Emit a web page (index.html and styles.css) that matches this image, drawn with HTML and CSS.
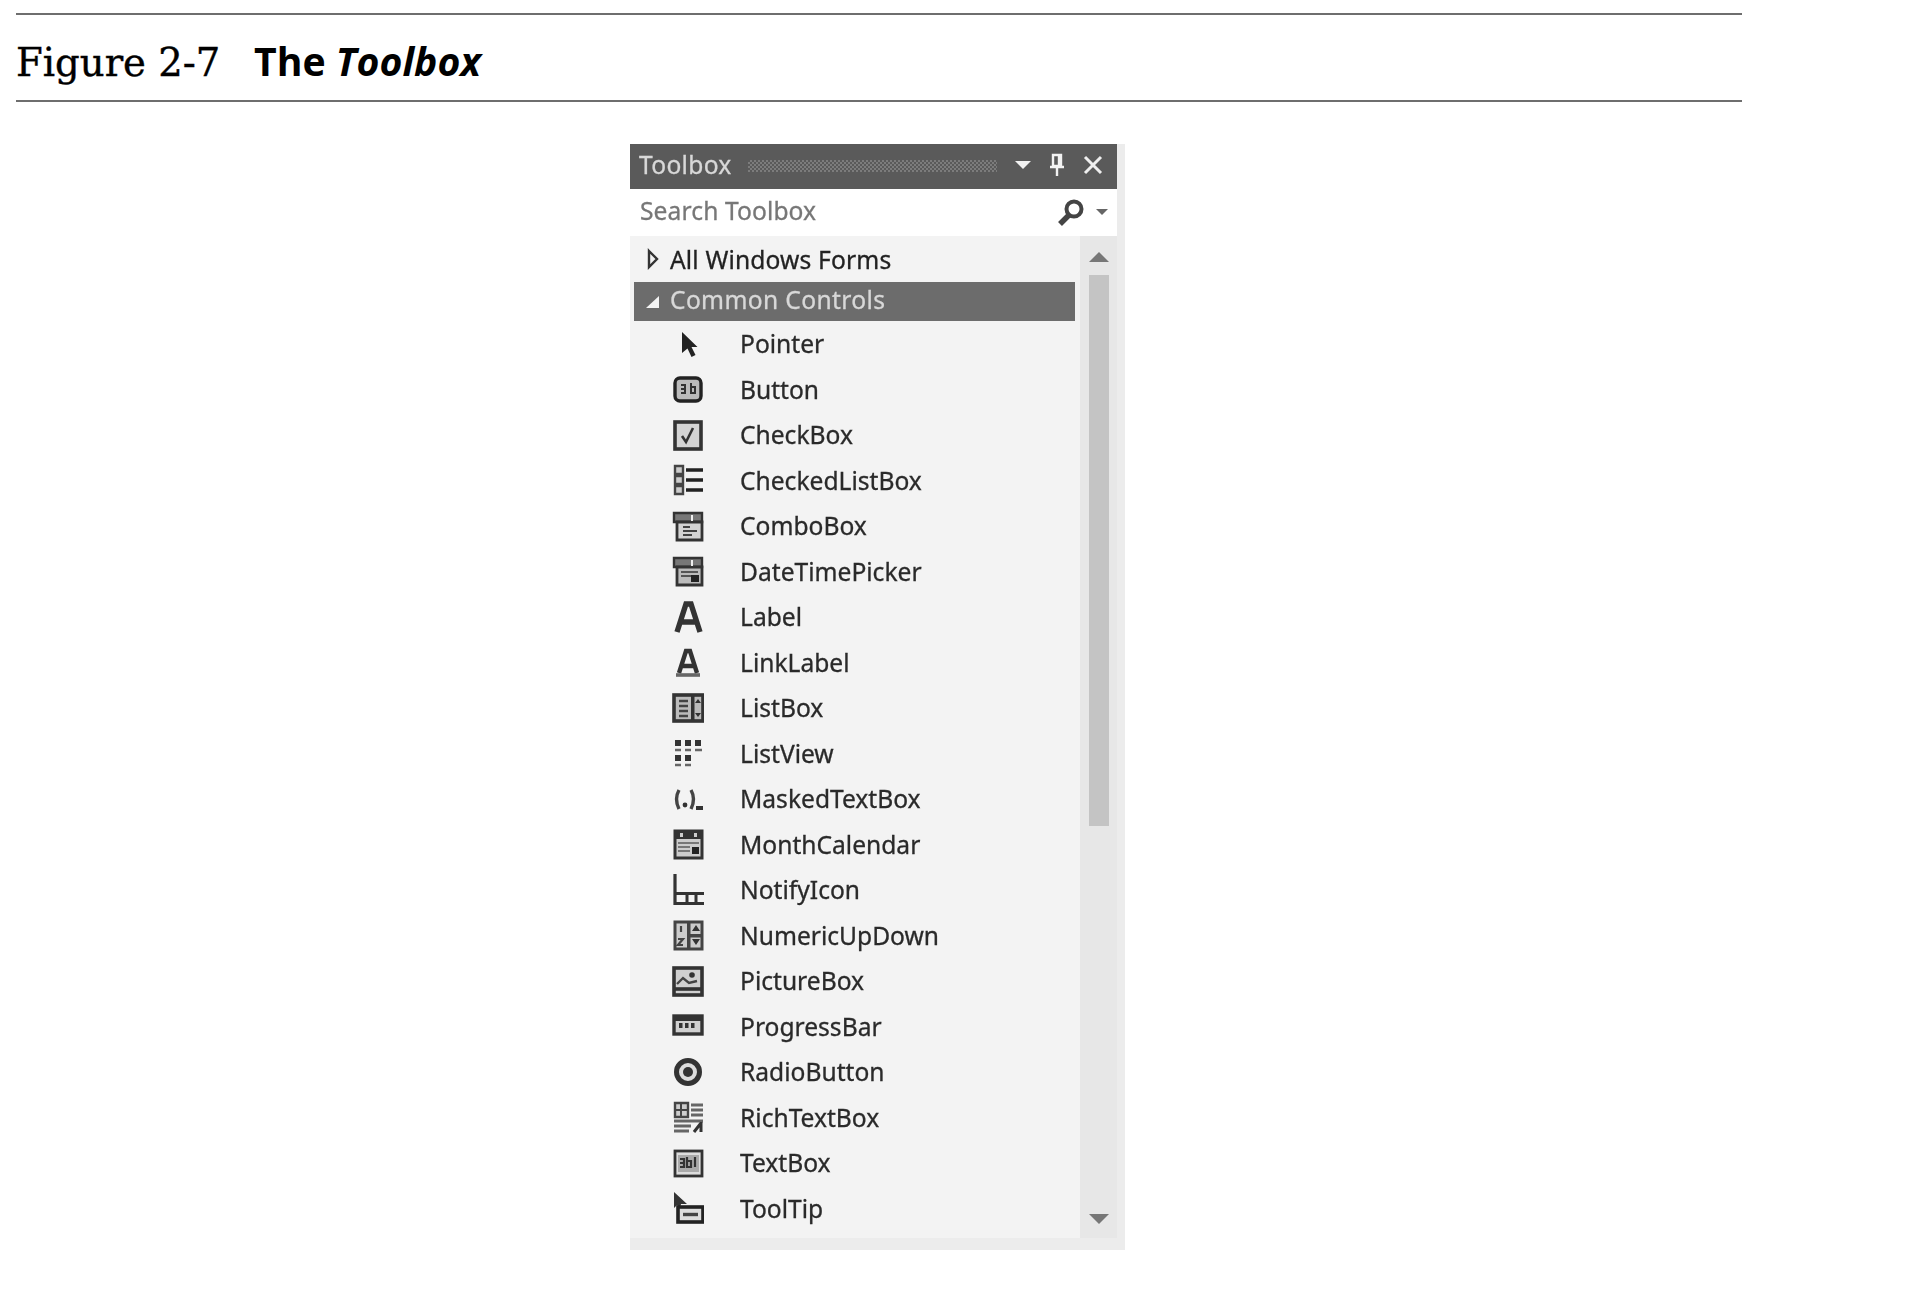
FILE: index.html
```html
<!DOCTYPE html>
<html lang="en">
<head>
    <meta charset="UTF-8">
    <meta name="viewport" content="width=device-width, initial-scale=1.0">
    <title>Figure 2-7 The Toolbox</title>
    <link rel="stylesheet" href="styles.css">
</head>
<body>
<header class="figure-head">
    <h1><span class="figure-num">Figure 2-7</span><span class="figure-name">The <em>Toolbox</em></span></h1>
</header>

<section class="panel">
    <div class="title-bar">
        <span class="title-text">Toolbox</span>
        <span class="grip"></span>
        <svg class="title-icon" width="20" height="30" viewBox="0 0 20 30"><path d="M2 11h16l-8 8z" fill="#f2f2f2"/></svg>
        <svg class="title-icon" width="20" height="30" viewBox="0 0 20 30"><path d="M6 5h8v11H6zM3 17h14M10 17v9M12 6v10" fill="none" stroke="#f2f2f2" stroke-width="2.4"/></svg>
        <svg class="title-icon" width="24" height="30" viewBox="0 0 24 30"><path d="M4 7l16 16M20 7L4 23" fill="none" stroke="#efefef" stroke-width="3"/></svg>
    </div>
    <div class="search-bar">
        <span class="search-text">Search Toolbox</span>
        <svg class="search-icon" width="30" height="32" viewBox="0 0 30 32"><circle cx="18" cy="12" r="7.5" fill="none" stroke="#444" stroke-width="4"/><path d="M13 18L4 27" stroke="#444" stroke-width="5.5"/></svg>
        <svg class="search-drop" width="14" height="10" viewBox="0 0 14 10"><path d="M1 2h12l-6 6z" fill="#666"/></svg>
    </div>
    <div class="list-wrap">
        <div class="tool-list">
            <div class="group-row">
                <svg width="16" height="24" viewBox="0 0 16 24"><path d="M4 4l8 8-8 8z" fill="none" stroke="#333" stroke-width="2.4"/></svg>
                <span>All Windows Forms</span>
            </div>
            <div class="group-row group-open">
                <svg width="16" height="24" viewBox="0 0 16 24"><path d="M14 6v12H1z" fill="#f4f4f4"/></svg>
                <span>Common Controls</span>
            </div>

            <div class="tool-row">
                <svg class="tool-icon" viewBox="0 0 32 32"><path d="M10 4v21l5.5-4.5 4 8.5 4-2-4-8h6z" fill="#222"/></svg>
                <span>Pointer</span>
            </div>
            <div class="tool-row">
                <svg class="tool-icon" viewBox="0 0 32 32"><rect x="3" y="5" width="26" height="23" rx="5" fill="#bbb" stroke="#222" stroke-width="3.4"/><path d="M9 12h4v8H9M13 16H9M19 10v10h4v-6h-4" fill="none" stroke="#333" stroke-width="2"/></svg>
                <span>Button</span>
            </div>
            <div class="tool-row">
                <svg class="tool-icon" viewBox="0 0 32 32"><rect x="3" y="3" width="26" height="27" fill="#d4d4d4" stroke="#333" stroke-width="3.6"/><path d="M10 17l4 6 7-14" fill="none" stroke="#333" stroke-width="2.6"/></svg>
                <span>CheckBox</span>
            </div>
            <div class="tool-row">
                <svg class="tool-icon" viewBox="0 0 32 32"><path d="M3 2h8v8H3zM3 12h8v8H3zM3 22h8v8H3z" fill="#ccc" stroke="#444" stroke-width="2.4"/><path d="M14 6h17M14 16h17M14 26h17" stroke="#222" stroke-width="3.4"/></svg>
                <span>CheckedListBox</span>
            </div>
            <div class="tool-row">
                <svg class="tool-icon" viewBox="0 0 32 32"><path d="M2 3h28v9H2z" fill="#777" stroke="#333" stroke-width="2.4"/><path d="M5 12h25v18H5z" fill="#d4d4d4" stroke="#333" stroke-width="2.8"/><path d="M20 5v6" stroke="#eee" stroke-width="2"/><path d="M11 17h7M11 21h14M11 25h9" stroke="#444" stroke-width="2"/></svg>
                <span>ComboBox</span>
            </div>
            <div class="tool-row">
                <svg class="tool-icon" viewBox="0 0 32 32"><path d="M2 3h28v9H2z" fill="#777" stroke="#333" stroke-width="2.4"/><path d="M5 12h25v18H5z" fill="#bbb" stroke="#333" stroke-width="2.8"/><path d="M20 5v6" stroke="#eee" stroke-width="2"/><path d="M9 17h17M9 21h10" stroke="#555" stroke-width="2"/><rect x="19" y="20" width="8" height="7" fill="#222"/></svg>
                <span>DateTimePicker</span>
            </div>
            <div class="tool-row">
                <svg class="tool-icon" viewBox="0 0 32 32"><path d="M5 31L14 3h5l9 28M9 21h15" fill="none" stroke="#333" stroke-width="5.4"/></svg>
                <span>Label</span>
            </div>
            <div class="tool-row">
                <svg class="tool-icon" viewBox="0 0 32 32"><path d="M7 27L14 5h4l7 22M10 20h12" fill="none" stroke="#333" stroke-width="4.4"/><path d="M4 29h24" stroke="#666" stroke-width="3.6"/></svg>
                <span>LinkLabel</span>
            </div>
            <div class="tool-row">
                <svg class="tool-icon" viewBox="0 0 32 32"><rect x="2" y="3" width="29" height="26" fill="#bbb" stroke="#333" stroke-width="3.6"/><path d="M7 9h9M7 14h9M7 19h9M7 24h9" stroke="#444" stroke-width="2.4"/><path d="M19 4h3.5v24H19z" fill="#333"/><path d="M23 11l3-4 3 4zM23 21h6l-3 4z" fill="#333"/></svg>
                <span>ListBox</span>
            </div>
            <div class="tool-row">
                <svg class="tool-icon" viewBox="0 0 32 32"><path d="M3 3h6v6H3zM13 3h6v6h-6zM23 3h6v6h-6zM3 18h6v6H3zM13 18h6v6h-6z" fill="#333"/><path d="M3 13h6M13 13h6M23 13h7M3 28h6M13 28h6" stroke="#666" stroke-width="2.4"/></svg>
                <span>ListView</span>
            </div>
            <div class="tool-row">
                <svg class="tool-icon" viewBox="0 0 32 32"><path d="M7 7q-5 9 0 19M19 7q5 9 0 19" fill="none" stroke="#444" stroke-width="3.4"/><circle cx="13" cy="22" r="2.4" fill="#333"/><path d="M24 23h7v4h-7z" fill="#333"/></svg>
                <span>MaskedTextBox</span>
            </div>
            <div class="tool-row">
                <svg class="tool-icon" viewBox="0 0 32 32"><rect x="3" y="3" width="27" height="27" fill="#ccc" stroke="#333" stroke-width="3"/><path d="M3 4h27v7H3z" fill="#333"/><path d="M8 5h3v4H8zM22 5h3v4h-3z" fill="#ccc"/><path d="M6 15h21M6 19h12M6 23h12" stroke="#777" stroke-width="2.2"/><rect x="20" y="19" width="7" height="7" fill="#222"/></svg>
                <span>MonthCalendar</span>
            </div>
            <div class="tool-row">
                <svg class="tool-icon" viewBox="0 0 32 32"><path d="M3 0v29.5h29M3 19.5h29" fill="none" stroke="#333" stroke-width="3.2"/><path d="M15 20v9M24 20v9" stroke="#333" stroke-width="3"/></svg>
                <span>NotifyIcon</span>
            </div>
            <div class="tool-row">
                <svg class="tool-icon" viewBox="0 0 32 32"><rect x="3" y="3" width="27" height="27" fill="#ccc" stroke="#444" stroke-width="3"/><path d="M15 3h3.5v27H15zM18 15h12v3.500H18z" fill="#444"/><path d="M20 12l4-6 4 6zM20 20h8l-4 6z" fill="#333"/><path d="M9 7v6M6 20h5l-5 6h5" fill="none" stroke="#444" stroke-width="2.200"/></svg>
                <span>NumericUpDown</span>
            </div>
            <div class="tool-row">
                <svg class="tool-icon" viewBox="0 0 32 32"><rect x="2" y="3" width="28" height="27" fill="#d0d0d0" stroke="#333" stroke-width="3.600"/><path d="M5 19l6-6 6 5 8-2" fill="none" stroke="#444" stroke-width="2.400"/><circle cx="20" cy="10" r="2.800" fill="#333"/><path d="M3 24h26" stroke="#333" stroke-width="3.600"/></svg>
                <span>PictureBox</span>
            </div>
            <div class="tool-row">
                <svg class="tool-icon" viewBox="0 0 32 32"><rect x="2" y="6" width="28" height="18" fill="#d0d0d0" stroke="#333" stroke-width="3.400"/><path d="M3 7h26v4H3z" fill="#333"/><path d="M7 13h3.500v5H7zM13 13h3.500v5H13zM19 13h3.500v5H19z" fill="#333"/></svg>
                <span>ProgressBar</span>
            </div>
            <div class="tool-row">
                <svg class="tool-icon" viewBox="0 0 32 32"><circle cx="16" cy="16" r="11.500" fill="#ddd" stroke="#333" stroke-width="5"/><circle cx="16" cy="16" r="5" fill="#333"/></svg>
                <span>RadioButton</span>
            </div>
            <div class="tool-row">
                <svg class="tool-icon" viewBox="0 0 32 32"><path d="M3 2h13v14H3z" fill="#ccc" stroke="#444" stroke-width="2.400"/><path d="M9 3v13M3 9h13" stroke="#444" stroke-width="2"/><path d="M19 4h12M19 9h12M19 14h12M2 20h29M2 25h17M2 30h15" stroke="#666" stroke-width="2.800"/><path d="M29 21v10M29 22l-7 9" fill="none" stroke="#333" stroke-width="3"/></svg>
                <span>RichTextBox</span>
            </div>
            <div class="tool-row">
                <svg class="tool-icon" viewBox="0 0 32 32"><rect x="3" y="4" width="27" height="25" fill="#ddd" stroke="#333" stroke-width="2.800"/><rect x="6" y="8" width="21" height="17" fill="#aaa"/><path d="M8 12h4v8H8M8 16h4M15 10v10h4v-6h-4M23 10v10" fill="none" stroke="#333" stroke-width="2.200"/></svg>
                <span>TextBox</span>
            </div>
            <div class="tool-row">
                <svg class="tool-icon" viewBox="0 0 32 32"><path d="M2 0v16l3-3 3 3 1-4h6z" fill="#333"/><rect x="6" y="15" width="25" height="15" fill="#ddd" stroke="#222" stroke-width="3.600"/><path d="M11 22.500h15" stroke="#444" stroke-width="3.400"/></svg>
                <span>ToolTip</span>
            </div>
        </div>
        <div class="scroll-bar">
            <svg width="20" height="12" viewBox="0 0 20 12"><path d="M0 11L10 1l10 10z" fill="#777"/></svg>
            <div class="scroll-track"><div class="scroll-thumb"></div></div>
            <svg width="20" height="12" viewBox="0 0 20 12"><path d="M0 1h20L10 11z" fill="#777"/></svg>
        </div>
    </div>
</section>
</body>
</html>
```

FILE: styles.css
```css
body {
    background-color: #fff;
    color: #000;
    margin: 0;
    padding: 13px 0 0;
}

.figure-head {
    width: 1726px;
    margin-left: 16px;
    height: 85px;
    border-top: 2px solid #6e6e6e;
    border-bottom: 2px solid #6e6e6e;
    display: flex;
    align-items: center;
}

.figure-head h1 {
    margin: 5px 0 0;
    font-weight: normal;
    display: flex;
    align-items: baseline;
}

.figure-num {
    font-family: "DejaVu Serif", serif;
    font-size: 38.6px;
    width: 238px;
    -webkit-text-stroke: 0.4px #000;
}

.figure-name {
    font-family: "Open Sans", sans-serif;
    font-weight: bold;
    font-size: 39.2px;
}

.panel {
    width: 487px;
    margin: 42px 0 0 630px;
    padding: 0 8px 12px 0;
    background-color: #ececec;
    font-family: "Noto Sans", sans-serif;
    font-size: 24.6px;
    -webkit-text-stroke: 0.3px;
    filter: blur(0.7px);
}

.title-bar {
    height: 45px;
    background-color: #5a5a5a;
    color: #d8d8d8;
    display: flex;
    align-items: center;
    padding: 0 12px 0 9px;
}

.title-text {
    margin-bottom: 4px;
    letter-spacing: 0.3px;
}

.grip {
    flex: 1;
    height: 12px;
    margin: 0 2px 2px 16px;
    background-image: repeating-conic-gradient(#7c7c7c 0 25%, #5a5a5a 0 50%);
    background-size: 4px 4px;
}

.title-icon {
    margin-left: 14px;
    margin-bottom: 3px;
}

.search-bar {
    height: 47px;
    background-color: #fff;
    color: #777;
    display: flex;
    align-items: center;
    padding: 0 8px 0 10px;
}

.search-text {
    flex: 1;
    margin-bottom: 5px;
    letter-spacing: 0.1px;
}

.search-icon {
    margin-right: 4px;
}

.search-drop {
    margin: 0 0 2px 5px;
}

.list-wrap {
    display: flex;
    background-color: #f3f3f3;
}

.tool-list {
    flex: 1;
    padding-bottom: 7px;
}

.group-row {
    height: 46px;
    display: flex;
    align-items: center;
    padding-left: 15px;
    color: #222;
}

.group-row span {
    margin-left: 9px;
    letter-spacing: 0.15px;
}

.group-open {
    height: 39px;
    margin: 0 5px 0 4px;
    padding-left: 11px;
    background-color: #6c6c6c;
    color: #d8d8d8;
}

.group-open span {
    margin-bottom: 4px;
    letter-spacing: 0.35px;
}

.tool-row {
    height: 45.5px;
    display: flex;
    align-items: center;
    padding-left: 42px;
    color: #2a2a2a;
}

.tool-icon {
    width: 32px;
    height: 32px;
    margin-right: 36px;
}

.scroll-bar {
    width: 37px;
    background-color: #e7e7e7;
    display: flex;
    flex-direction: column;
    align-items: center;
    padding: 15px 0 13px;
    box-sizing: border-box;
}

.scroll-track {
    flex: 1;
    width: 20px;
    margin: 5px 0 7px;
}

.scroll-thumb {
    height: 551px;
    margin-top: 7px;
    background-color: #c4c4c4;
}
```
